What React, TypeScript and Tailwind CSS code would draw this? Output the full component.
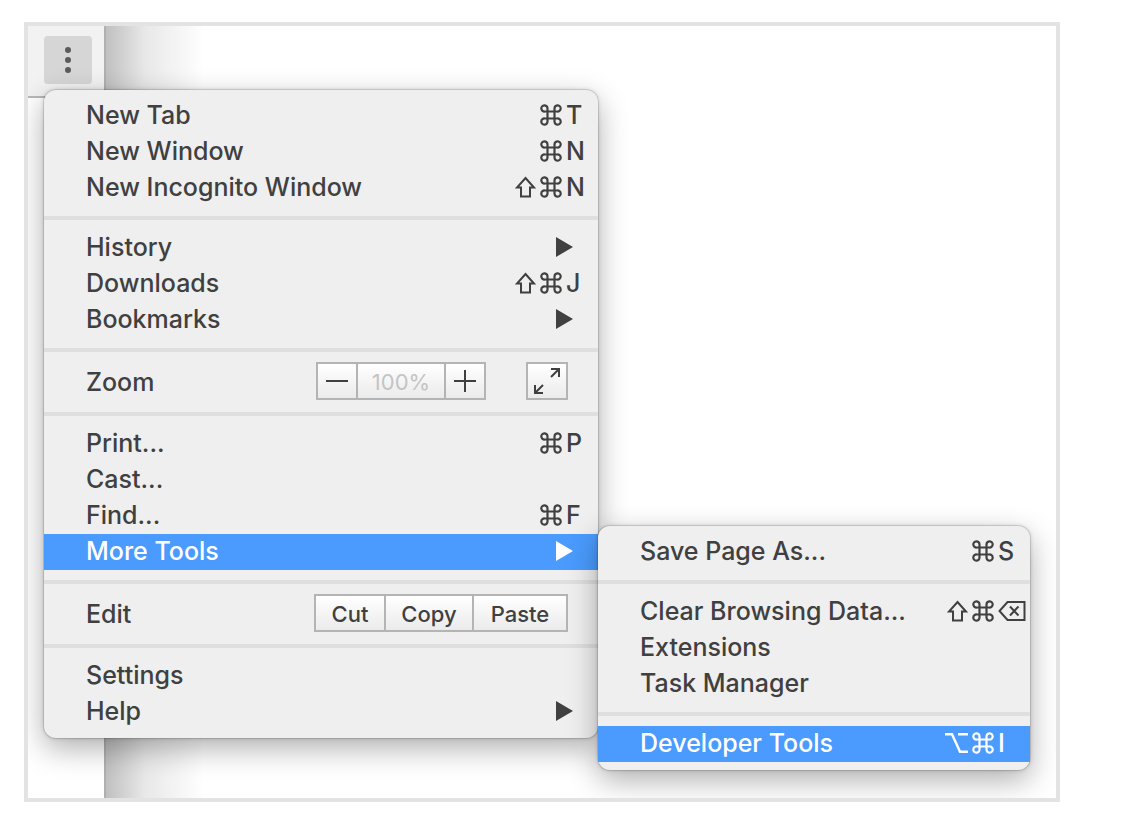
/**
 * App.tsx: browser main menu with the "More Tools" submenu open.
 */

import type { ReactNode } from 'react';

type Mod = 'shift' | 'command' | 'option';

interface Item {
  label: string;
  mods?: Mod[];
  keyName?: string;
}

const TAB_ITEMS: Item[] = [
  { label: 'New Tab', mods: ['command'], keyName: 'T' },
  { label: 'New Window', mods: ['command'], keyName: 'N' },
  { label: 'New Incognito Window', mods: ['shift', 'command'], keyName: 'N' },
];

const DATA_ITEMS: Item[] = [
  { label: 'Clear Browsing Data...', mods: ['shift', 'command'], keyName: 'Delete' },
  { label: 'Extensions' },
  { label: 'Task Manager' },
];

const MENU_BOX =
  'rounded-xl bg-[#efefef] py-2 shadow-[0_0_0_1px_rgba(0,0,0,0.1),0_0_4px_rgba(0,0,0,0.18),0_10px_30px_rgba(0,0,0,0.32)]';
const CONTROL = 'h-[38px] border-2 border-[#b4b4b4] bg-linear-to-b from-white to-[#ebebeb]';

function Arrow() {
  return (
    <svg viewBox="0 0 17 20" className="mr-[25px] h-5 w-[17px]" fill="currentColor" aria-hidden>
      <path d="M0 0L17 10L0 20Z" />
    </svg>
  );
}

function ModIcon({ mod }: { mod: Mod }) {
  if (mod === 'shift') {
    return (
      <svg viewBox="0 0 21 22" className="mr-1 h-[22px] w-[21px]" fill="none" stroke="currentColor" strokeWidth="2" role="img" aria-label="Shift">
        <path d="M10.5 2L19 11.5H15V20.5H6V11.5H2Z" />
      </svg>
    );
  }
  if (mod === 'option') {
    return (
      <svg viewBox="0 0 23 22" className="mr-1 h-[22px] w-[23px]" fill="none" stroke="currentColor" strokeWidth="2.4" role="img" aria-label="Option">
        <path d="M0 2.2H7L15 19.8H23M13 2.2H23" />
      </svg>
    );
  }
  return (
    <svg viewBox="0 0 22 22" className="mr-1 size-[22px]" fill="none" stroke="currentColor" strokeWidth="2.2" role="img" aria-label="Command">
      <path d="M7.5 7.5H14.5V14.5H7.5ZM7.5 7.5H4.8A3.1 3.1 0 1 1 7.5 4.4ZM14.5 7.5V4.4A3.1 3.1 0 1 1 17.2 7.5ZM14.5 14.5H17.2A3.1 3.1 0 1 1 14.5 17.6ZM7.5 14.5V17.6A3.1 3.1 0 1 1 4.8 14.5Z" />
    </svg>
  );
}

function DeleteIcon() {
  return (
    <svg viewBox="0 0 28 22" className="mr-1 h-[22px] w-7" fill="none" stroke="currentColor" strokeWidth="2" role="img" aria-label="Delete">
      <path d="M9.5 2H26.5V20H9.5L1.5 11ZM12 6.5L20.5 15.5M20.5 6.5L12 15.5" />
    </svg>
  );
}

function Shortcut({ mods, keyName }: { mods: Mod[]; keyName: string }) {
  return (
    <span className="flex items-center">
      {mods.map((mod) => (
        <ModIcon key={mod} mod={mod} />
      ))}
      {keyName === 'Delete' ? <DeleteIcon /> : <span className="w-8">{keyName}</span>}
    </span>
  );
}

function MenuItem({
  label,
  mods,
  keyName,
  arrow = false,
  active = false,
  children,
}: Item & { arrow?: boolean; active?: boolean; children?: ReactNode }) {
  return (
    <li className="relative">
      <button
        className={`flex h-9 w-full items-center justify-between pb-0.5 pl-[42px] text-left ${
          active ? 'bg-[#4a9bfd] text-white' : ''
        }`}
      >
        <span className="whitespace-nowrap">{label}</span>
        {arrow && <Arrow />}
        {mods && keyName && <Shortcut mods={mods} keyName={keyName} />}
      </button>
      {children}
    </li>
  );
}

function Separator() {
  return <li role="separator" className="my-[10px] h-1 bg-[#dfdfdf]" />;
}

function MoreToolsMenu() {
  return (
    <ul className={`absolute -top-2 left-full z-10 w-[432px] text-[#404040] ${MENU_BOX}`}>
      <MenuItem label="Save Page As..." mods={['command']} keyName="S" />
      <Separator />
      {DATA_ITEMS.map((item) => (
        <MenuItem key={item.label} {...item} />
      ))}
      <Separator />
      <MenuItem label="Developer Tools" mods={['option', 'command']} keyName="I" active />
    </ul>
  );
}

function ZoomRow() {
  return (
    <li className="flex h-10 items-center pr-[30px] pl-[42px]">
      <span className="flex-1">Zoom</span>
      <div className={`flex self-start ${CONTROL}`}>
        <button aria-label="Zoom out" className="flex w-[38px] items-center justify-center">
          <svg viewBox="0 0 22 22" className="size-[22px]" stroke="currentColor" strokeWidth="2" aria-hidden>
            <path d="M0 11H22" />
          </svg>
        </button>
        <span className="w-[90px] border-x-2 border-[#b4b4b4] text-center text-[22px] leading-9 font-normal text-[#c4c4c4]">
          100%
        </span>
        <button aria-label="Zoom in" className="flex w-[38px] items-center justify-center">
          <svg viewBox="0 0 22 22" className="size-[22px]" stroke="currentColor" strokeWidth="2" aria-hidden>
            <path d="M0 11H22M11 0V22" />
          </svg>
        </button>
      </div>
      <button
        aria-label="Full screen"
        className={`ml-10 flex w-[42px] items-center justify-center self-start ${CONTROL}`}
      >
        <svg viewBox="0 0 28 28" className="size-7" fill="none" stroke="currentColor" strokeWidth="2" aria-hidden>
          <path d="M18 2H26V10M26 2L18 10M2 18V26H10M2 26L10 18" />
        </svg>
      </button>
    </li>
  );
}

function EditRow() {
  return (
    <li className="flex h-10 items-center pr-[30px] pl-[42px]">
      <span className="flex-1">Edit</span>
      <div className={`flex self-start text-[22px] leading-9 ${CONTROL}`}>
        <button className="w-[68px]">Cut</button>
        <button className="w-[90px] border-x-2 border-[#b4b4b4]">Copy</button>
        <button className="w-[92px]">Paste</button>
      </div>
    </li>
  );
}

export default function App() {
  return (
    <main className="min-h-screen bg-white pt-[22px] pr-[86px] pb-6 pl-6 font-['Inter',sans-serif] text-[25px] leading-9 font-medium text-[#404040]">
      <div className="relative overflow-hidden border-4 border-[#e3e3e3]">
        {/* Right edge of the browser window and the shadow it casts */}
        <div className="absolute inset-0 flex" aria-hidden>
          <div className="w-[76px] bg-white">
            <div className="h-[72px] border-b-2 border-[#b8b8b8] bg-[#f2f2f2]" />
          </div>
          <div className="w-[100px] border-l-2 border-[#b0b0b0] bg-linear-to-r from-[#c0c0c0] via-[#e8e8e8] via-40% to-white" />
        </div>

        <div className="relative pt-[10px] pb-[60px] pl-4">
          <button
            aria-label="Menu"
            className="mb-[6px] flex size-12 items-center justify-center rounded-sm bg-[#d6d6d6] text-[#5a5a5a]"
          >
            <svg viewBox="0 0 6 26" className="h-[26px] w-[6px]" fill="currentColor" aria-hidden>
              <circle cx="3" cy="3" r="3" />
              <circle cx="3" cy="13" r="3" />
              <circle cx="3" cy="23" r="3" />
            </svg>
          </button>

          <ul className={`w-[554px] ${MENU_BOX}`}>
            {TAB_ITEMS.map((item) => (
              <MenuItem key={item.label} {...item} />
            ))}
            <Separator />
            <MenuItem label="History" arrow />
            <MenuItem label="Downloads" mods={['shift', 'command']} keyName="J" />
            <MenuItem label="Bookmarks" arrow />
            <Separator />
            <ZoomRow />
            <Separator />
            <MenuItem label="Print..." mods={['command']} keyName="P" />
            <MenuItem label="Cast..." />
            <MenuItem label="Find..." mods={['command']} keyName="F" />
            <MenuItem label="More Tools" arrow active>
              <MoreToolsMenu />
            </MenuItem>
            <Separator />
            <EditRow />
            <Separator />
            <MenuItem label="Settings" />
            <MenuItem label="Help" arrow />
          </ul>
        </div>
      </div>
    </main>
  );
}
